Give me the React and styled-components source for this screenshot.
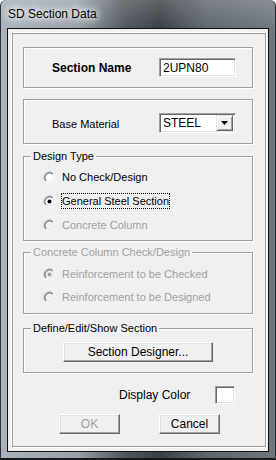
import { createGlobalStyle } from "styled-components";
import styled from "styled-components";

const Global = createGlobalStyle`
  html, body { margin: 0; padding: 0; background: #ffffff; }
  body { font-family: "Liberation Sans", Arial, sans-serif; font-size: 11px; color: #000; }
`;

const Window = styled.div`
  width: 276px;
  height: 460px;
  box-sizing: border-box;
  display: flex;
  flex-direction: column;
  padding: 0 6px 6px 6px;
  border-radius: 6px 6px 0 0;
  border-bottom: 2px solid #15181b;
  border-left: 1px solid #2b3035;
  border-right: 1px solid #2b3035;
  background:
    linear-gradient(180deg, rgba(255,255,255,0.18) 0%, rgba(255,255,255,0) 30px),
    linear-gradient(90deg, #a9b3bb 0%, #98a1a9 28%, #50565c 45%, #3a3f45 58%, #5f666d 75%, #6f767d 100%);
`;

const TitleBar = styled.div`
  flex-shrink: 0;
  height: 28px;
  display: flex;
  align-items: center;
  padding-left: 1px;
  font-size: 12px;
  color: #000;
  text-shadow: 0 0 6px #fff, 0 0 8px #fff, 0 0 10px rgba(255,255,255,0.8);
`;

const Client = styled.div`
  flex: 1;
  min-height: 0;
  display: flex;
  flex-direction: column;
  background: #f0f0f0;
  border: 1px solid #111;
  padding: 3px 1px 3px 3px;
`;

const Frame = styled.div`
  flex: 1;
  min-height: 0;
  border: 1px solid #a0a0a0;
  box-shadow: 0 0 0 1px #fff;
  margin: 1px;
  padding: 13px 10px 0 10px;
  display: flex;
  flex-direction: column;
`;

const Box = styled.div`
  flex-shrink: 0;
  width: 230px;
  box-sizing: border-box;
  height: ${(p) => p.$h}px;
  margin-top: ${(p) => p.$mt || 0}px;
  border: 1px solid #a0a0a0;
  box-shadow: 1px 1px 0 #fff, inset 1px 1px 0 #fff;
  display: flex;
  align-items: center;
  padding-left: 28px;
`;

const Label = styled.span`
  width: 107px;
  font-size: ${(p) => (p.$bold ? 12 : 11)}px;
  font-weight: ${(p) => (p.$bold ? "bold" : "normal")};
  margin-top: ${(p) => p.$dy || 0}px;
`;

const Sunken = styled.div`
  flex-shrink: 0;
  box-sizing: border-box;
  width: ${(p) => p.$w}px;
  height: ${(p) => p.$h}px;
  margin-top: ${(p) => p.$dy || 0}px;
  background: #fff;
  border-top: 1px solid #a0a0a0;
  border-left: 1px solid #a0a0a0;
  border-right: 1px solid #fff;
  border-bottom: 1px solid #fff;
  box-shadow: inset 1px 1px 0 #696969, inset -1px -1px 0 #e3e3e3;
  display: flex;
  align-items: center;
  padding: 0 2px 0 3px;
  font-size: 12px;
`;

const SelectText = styled.span`
  flex: 1;
`;

const ArrowBtn = styled.div`
  width: 17px;
  height: 16px;
  box-sizing: border-box;
  background: #f0f0f0;
  border-top: 1px solid #e3e3e3;
  border-left: 1px solid #e3e3e3;
  border-right: 1px solid #696969;
  border-bottom: 1px solid #696969;
  box-shadow: inset 1px 1px 0 #fff, inset -1px -1px 0 #a0a0a0;
  display: flex;
  align-items: center;
  justify-content: center;
`;

const Group = styled.div`
  flex-shrink: 0;
  width: 230px;
  box-sizing: border-box;
  margin-top: ${(p) => p.$mt}px;
  border: 1px solid #a0a0a0;
  box-shadow: 1px 1px 0 #fff, inset 1px 1px 0 #fff;
  padding: 0 0 ${(p) => p.$pb}px 0;
  display: flex;
  flex-direction: column;
`;

const Legend = styled.div`
  align-self: flex-start;
  margin: -7px 0 0 7px;
  padding: 0 2px;
  line-height: 13px;
  height: 13px;
  background: #f0f0f0;
  color: ${(p) => (p.$disabled ? "#a0a0a0" : "#000")};
`;

const Options = styled.div`
  display: flex;
  flex-direction: column;
  gap: ${(p) => p.$gap}px;
  padding: ${(p) => p.$pt}px 0 0 19px;
`;

const Option = styled.div`
  display: flex;
  align-items: center;
  height: 16px;
  gap: 5px;
  color: ${(p) => (p.$disabled ? "#a0a0a0" : "#000")};
`;

const OptionText = styled.span`
  border: 1px dotted ${(p) => (p.$focus ? "#000" : "transparent")};
  padding: 0;
  line-height: 14px;
  white-space: nowrap;
`;

const Button = styled.div`
  flex-shrink: 0;
  box-sizing: border-box;
  width: ${(p) => p.$w}px;
  height: 20px;
  margin-left: ${(p) => p.$ml || 0}px;
  background: #f0f0f0;
  border-top: 1px solid #fff;
  border-left: 1px solid #fff;
  border-right: 1px solid #696969;
  border-bottom: 1px solid #696969;
  box-shadow: inset -1px -1px 0 #a0a0a0, inset 1px 1px 0 #e3e3e3;
  display: flex;
  align-items: center;
  justify-content: center;
  font-size: 12px;
  color: ${(p) => (p.$disabled ? "#a0a0a0" : "#000")};
`;

const DesignerWrap = styled.div`
  display: flex;
  justify-content: center;
  padding-top: 7px;
`;

const ColorRow = styled.div`
  flex-shrink: 0;
  display: flex;
  align-items: center;
  margin-top: 13px;
  height: 18px;
  padding-left: 96px;
  font-size: 12px;
`;

const ColorLabel = styled.span`
  width: 96px;
`;

const ButtonRow = styled.div`
  flex-shrink: 0;
  display: flex;
  margin-top: 10px;
`;

const Radio = ({ checked, disabled }) => (
  <svg width="13" height="13" viewBox="0 0 13 13">
    <circle cx="6.5" cy="6.5" r="4.5" fill={disabled ? "#f0f0f0" : "#fff"} />
    <path d="M2.61 10.39 A5.5 5.5 0 0 1 10.39 2.61" fill="none" stroke="#a0a0a0" />
    <path d="M10.39 2.61 A5.5 5.5 0 0 1 2.61 10.39" fill="none" stroke="#fff" />
    <path d="M3.32 9.68 A4.5 4.5 0 0 1 9.68 3.32" fill="none" stroke="#696969" />
    <path d="M9.68 3.32 A4.5 4.5 0 0 1 3.32 9.68" fill="none" stroke="#e3e3e3" />
    {checked && <circle cx="6.5" cy="6.5" r="2" fill={disabled ? "#a0a0a0" : "#000"} />}
  </svg>
);

export default function App() {
  return (
    <>
      <Global />
      <Window>
        <TitleBar>SD Section Data</TitleBar>
        <Client>
          <Frame>
            <Box $h={41}>
              <Label $bold $dy={1}>Section Name</Label>
              <Sunken $w={77} $h={19}>2UPN80</Sunken>
            </Box>
            <Box $h={45} $mt={11}>
              <Label $dy={4}>Base Material</Label>
              <Sunken $w={77} $h={20} $dy={2}>
                <SelectText>STEEL</SelectText>
                <ArrowBtn>
                  <svg width="7" height="4" viewBox="0 0 7 4">
                    <path d="M0 0 H7 L3.5 4 Z" fill="#000" />
                  </svg>
                </ArrowBtn>
              </Sunken>
            </Box>

            <Group $mt={12} $pb={7}>
              <Legend>Design Type</Legend>
              <Options $pt={6} $gap={8}>
                <Option>
                  <Radio />
                  <OptionText>No Check/Design</OptionText>
                </Option>
                <Option>
                  <Radio checked />
                  <OptionText $focus>General Steel Section</OptionText>
                </Option>
                <Option $disabled>
                  <Radio disabled />
                  <OptionText>Concrete Column</OptionText>
                </Option>
              </Options>
            </Group>

            <Group $mt={11} $pb={8}>
              <Legend $disabled>Concrete Column Check/Design</Legend>
              <Options $pt={7} $gap={7}>
                <Option $disabled>
                  <Radio checked disabled />
                  <OptionText>Reinforcement to be Checked</OptionText>
                </Option>
                <Option $disabled>
                  <Radio disabled />
                  <OptionText>Reinforcement to be Designed</OptionText>
                </Option>
              </Options>
            </Group>

            <Group $mt={14} $pb={10}>
              <Legend>Define/Edit/Show Section</Legend>
              <DesignerWrap>
                <Button $w={150}>Section Designer...</Button>
              </DesignerWrap>
            </Group>

            <ColorRow>
              <ColorLabel>Display Color</ColorLabel>
              <Sunken $w={20} $h={18} />
            </ColorRow>

            <ButtonRow>
              <Button $w={61} $ml={36} $disabled>OK</Button>
              <Button $w={61} $ml={39}>Cancel</Button>
            </ButtonRow>
          </Frame>
        </Client>
      </Window>
    </>
  );
}
